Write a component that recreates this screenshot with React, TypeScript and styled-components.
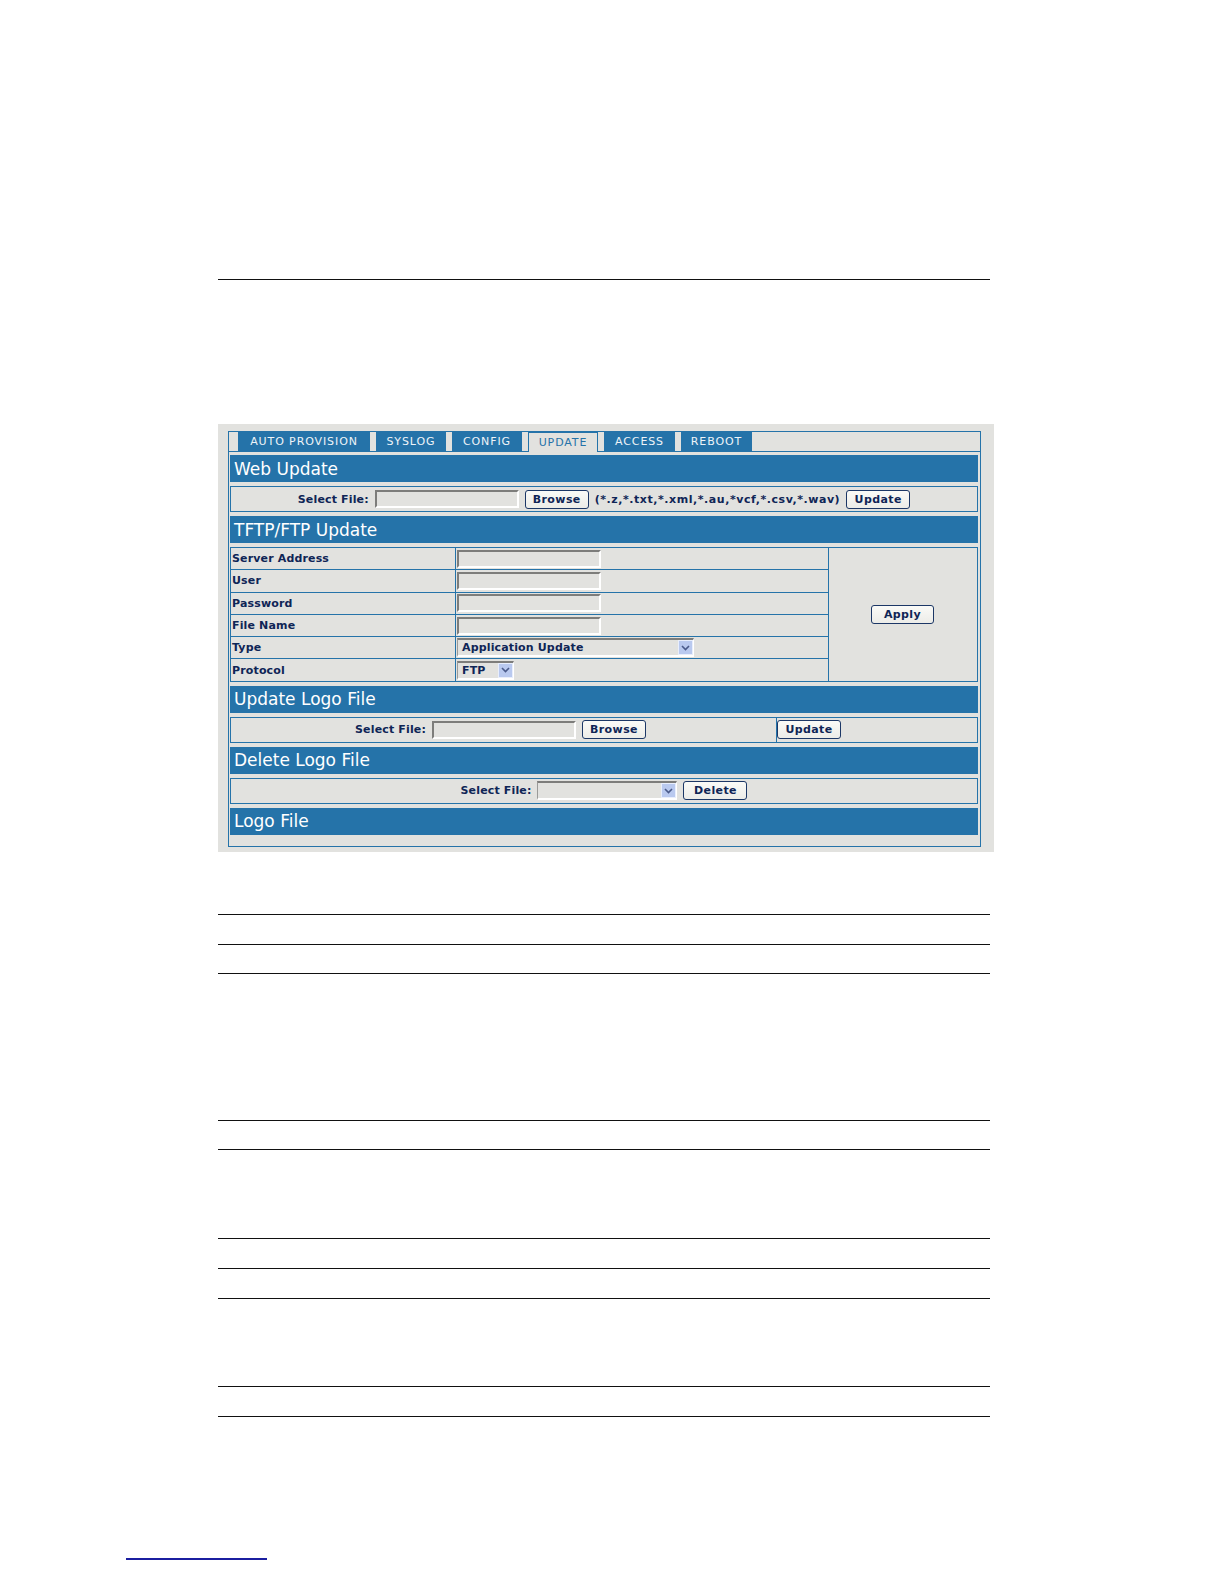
import styled, { createGlobalStyle } from "styled-components";

const Global = createGlobalStyle`
  html, body {
    margin: 0;
    padding: 0;
    background: #ffffff;
    overflow: hidden;
  }
  body {
    font-family: "DejaVu Sans", Verdana, sans-serif;
  }
`;

const BLUE = "#2573a9";
const NAVY = "#0f2556";
const GRAY = "#e2e2df";

const Page = styled.div`
  width: 1224px;
  height: 1584px;
  padding-top: 279px;
  box-sizing: border-box;
  position: relative;
  overflow: hidden;
`;

const Column = styled.div`
  margin-left: 218px;
  width: 772px;
`;

const Rule = styled.div<{ $top: number }>`
  height: 1px;
  background: #111;
  margin-top: ${(p) => p.$top}px;
`;

const Shot = styled.div`
  margin-top: 144px;
  width: 776px;
  height: 428px;
  box-sizing: border-box;
  background: ${GRAY};
  padding: 7px 13px 5px 10px;
`;

const Frame = styled.div`
  border: 1px solid ${BLUE};
  height: 100%;
  box-sizing: border-box;
  display: flex;
  flex-direction: column;
`;

const TabBar = styled.div`
  display: flex;
  height: 19px;
  border-bottom: 1px solid ${BLUE};
  padding-left: 9px;
  gap: 6px;
`;

const Tab = styled.div<{ $w: number; $active?: boolean }>`
  width: ${(p) => p.$w}px;
  box-sizing: border-box;
  height: ${(p) => (p.$active ? 20 : 19)}px;
  display: flex;
  align-items: center;
  justify-content: center;
  font-size: 11px;
  letter-spacing: 0.9px;
  color: ${(p) => (p.$active ? BLUE : "#eef3f8")};
  background: ${(p) => (p.$active ? GRAY : BLUE)};
  border: ${(p) => (p.$active ? `1px solid ${BLUE}` : "none")};
  border-bottom: none;
`;

const Body = styled.div`
  display: flex;
  flex-direction: column;
  gap: 4px;
  padding: 3px 2px 0 1px;
`;

const Header = styled.div`
  height: 27px;
  background: ${BLUE};
  color: #ffffff;
  font-size: 17px;
  display: flex;
  align-items: center;
  padding-left: 4px;
`;

const Row = styled.div<{ $split?: boolean }>`
  height: 26px;
  box-sizing: border-box;
  border: 1px solid ${BLUE};
  display: ${(p) => (p.$split ? "grid" : "flex")};
  grid-template-columns: 539px 1fr;
  align-items: center;
  justify-content: center;
  gap: 6px;
`;

const Cell = styled.div<{ $align: "center" | "flex-start"; $line?: boolean }>`
  height: 100%;
  display: flex;
  align-items: center;
  justify-content: ${(p) => p.$align};
  gap: 6px;
  border-left: ${(p) => (p.$line ? `1px solid ${BLUE}` : "none")};
`;

const Label = styled.span`
  font-size: 11px;
  font-weight: bold;
  letter-spacing: 0.15px;
  color: ${NAVY};
  white-space: nowrap;
`;

const Hint = styled(Label)`
  letter-spacing: 0.55px;
`;

const TextBox = styled.input<{ $w: number }>`
  width: ${(p) => p.$w}px;
  height: 18px;
  box-sizing: border-box;
  background: ${GRAY};
  border-top: 2px solid #7d7d7b;
  border-left: 2px solid #7d7d7b;
  border-right: 2px solid #ffffff;
  border-bottom: 2px solid #ffffff;
  padding: 0;
  margin: 0;
`;

const Button = styled.button<{ $w: number }>`
  width: ${(p) => p.$w}px;
  height: 19px;
  padding: 0;
  margin: 0;
  border: 1px solid #1c3766;
  border-radius: 3px;
  background: linear-gradient(#fafaf7, #ecece8);
  font-family: "DejaVu Sans", Verdana, sans-serif;
  font-size: 11px;
  font-weight: bold;
  letter-spacing: 0.4px;
  color: ${NAVY};
`;

const SelectBox = styled.div<{ $w: number }>`
  width: ${(p) => p.$w}px;
  height: 19px;
  box-sizing: border-box;
  display: flex;
  align-items: center;
  background: ${GRAY};
  border-top: 2px solid #7d7d7b;
  border-left: 1px solid #9a9a98;
  border-right: 1px solid #ffffff;
  border-bottom: 2px solid #ffffff;
  padding-left: 4px;
  font-size: 11px;
  font-weight: bold;
  letter-spacing: 0.15px;
  color: ${NAVY};
`;

const SelectText = styled.span`
  flex: 1;
  white-space: nowrap;
`;

const Arrow = styled.span`
  width: 15px;
  height: 15px;
  background: #b9c9ef;
  border: 1px solid #e8eefc;
  box-sizing: border-box;
  display: flex;
  align-items: center;
  justify-content: center;
`;

const Grid = styled.div`
  display: grid;
  grid-template-columns: 224px 372px 1fr;
  grid-template-rows: repeat(6, 21.3px);
  gap: 1px;
  padding: 1px;
  background: ${BLUE};
`;

const GCell = styled.div<{ $row: number }>`
  grid-row: ${(p) => p.$row};
  background: ${GRAY};
  display: flex;
  align-items: center;
  padding-left: 1px;
`;

const ApplyCell = styled.div`
  background: ${GRAY};
  grid-column: 3;
  grid-row: 1 / span 6;
  display: flex;
  align-items: center;
  justify-content: center;
  padding-right: 1px;
`;

const FootLink = styled.div`
  position: absolute;
  left: 126px;
  top: 1558px;
  width: 141px;
  height: 2px;
  background: #1b1ea0;
`;

function Select({ w, text }: { w: number; text: string }) {
  return (
    <SelectBox $w={w}>
      <SelectText>{text}</SelectText>
      <Arrow>
        <svg width="9" height="6" viewBox="0 0 9 6">
          <path d="M1 1 L4.5 4.5 L8 1" stroke="#4a5a8a" strokeWidth="1.6" fill="none" />
        </svg>
      </Arrow>
    </SelectBox>
  );
}

const tabs = [
  { name: "AUTO PROVISION", w: 132 },
  { name: "SYSLOG", w: 70 },
  { name: "CONFIG", w: 70 },
  { name: "UPDATE", w: 70, active: true },
  { name: "ACCESS", w: 71 },
  { name: "REBOOT", w: 71 },
];

const fields = ["Server Address", "User", "Password", "File Name"];

export default function App() {
  return (
    <Page>
      <Global />
      <Column>
        <Rule $top={0} />
        <Shot>
          <Frame>
            <TabBar>
              {tabs.map((t) => (
                <Tab key={t.name} $w={t.w} $active={t.active}>
                  {t.name}
                </Tab>
              ))}
            </TabBar>
            <Body>
              <Header>Web Update</Header>
              <Row>
                <Label>Select File:</Label>
                <TextBox $w={144} />
                <Button $w={64}>Browse</Button>
                <Hint>(*.z,*.txt,*.xml,*.au,*vcf,*.csv,*.wav)</Hint>
                <Button $w={64}>Update</Button>
              </Row>

              <Header>TFTP/FTP Update</Header>
              <Grid>
                {fields.map((f, i) => [
                  <GCell key={f} $row={i + 1}>
                    <Label>{f}</Label>
                  </GCell>,
                  <GCell key={f + "-in"} $row={i + 1}>
                    <TextBox $w={144} />
                  </GCell>,
                ])}
                <GCell $row={5}>
                  <Label>Type</Label>
                </GCell>
                <GCell $row={5}>
                  <Select w={237} text="Application Update" />
                </GCell>
                <GCell $row={6}>
                  <Label>Protocol</Label>
                </GCell>
                <GCell $row={6}>
                  <Select w={57} text="FTP" />
                </GCell>
                <ApplyCell>
                  <Button $w={63}>Apply</Button>
                </ApplyCell>
              </Grid>

              <Header>Update Logo File</Header>
              <Row $split>
                <Cell $align="center">
                  <Label>Select File:</Label>
                  <TextBox $w={144} />
                  <Button $w={64}>Browse</Button>
                </Cell>
                <Cell $align="flex-start" $line>
                  <Button $w={64}>Update</Button>
                </Cell>
              </Row>

              <Header>Delete Logo File</Header>
              <Row>
                <Label>Select File:</Label>
                <Select w={140} text="" />
                <Button $w={64}>Delete</Button>
              </Row>

              <Header>Logo File</Header>
            </Body>
          </Frame>
        </Shot>
        <Rule $top={62} />
        <Rule $top={29} />
        <Rule $top={28} />
        <Rule $top={146} />
        <Rule $top={28} />
        <Rule $top={88} />
        <Rule $top={29} />
        <Rule $top={29} />
        <Rule $top={87} />
        <Rule $top={29} />
      </Column>
      <FootLink />
    </Page>
  );
}
